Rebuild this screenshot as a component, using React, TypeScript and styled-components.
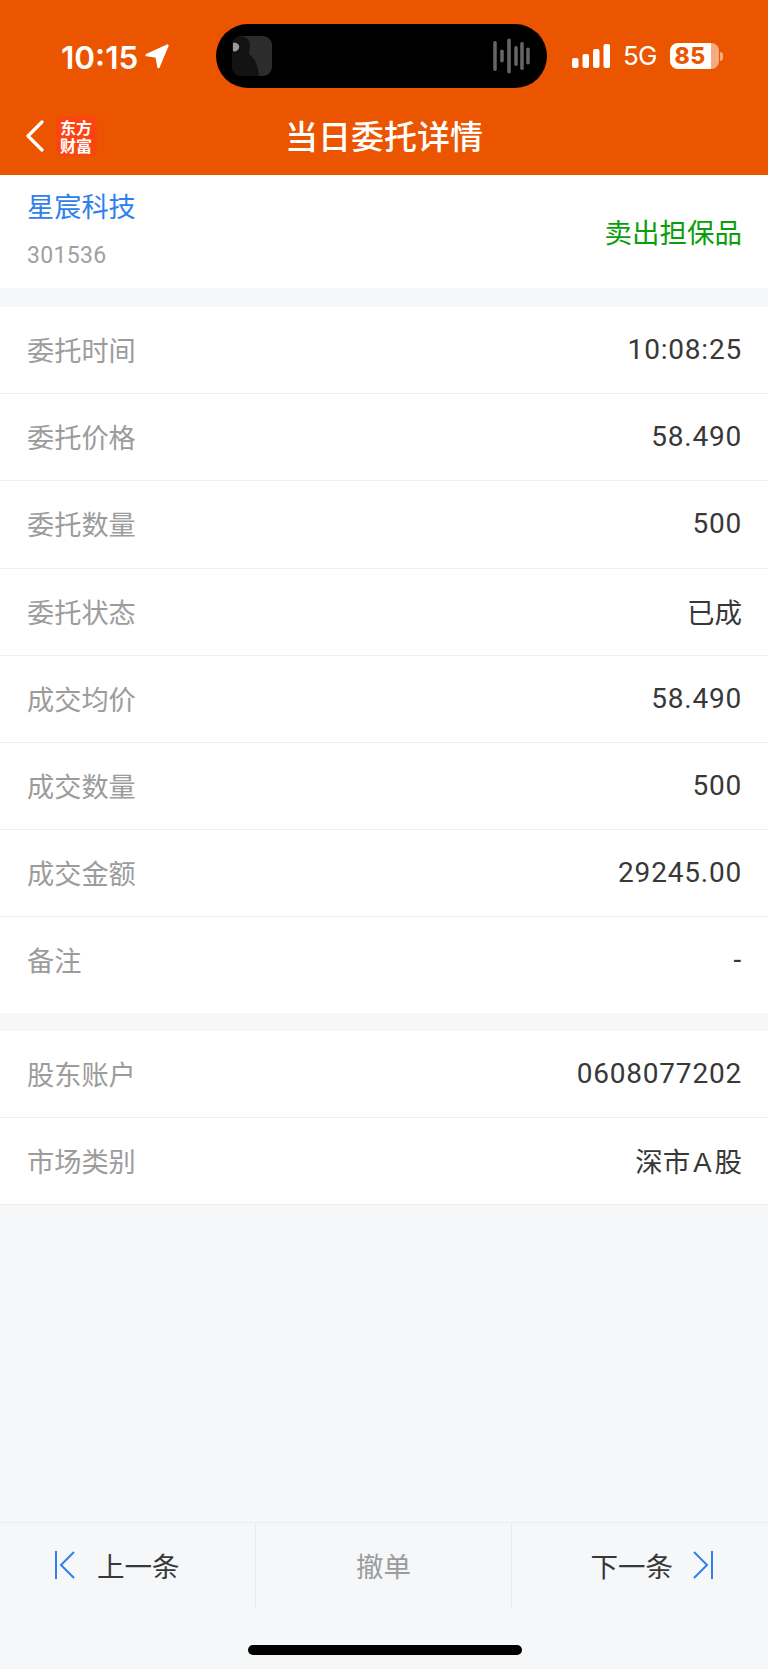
import React from 'react'
import styled, { createGlobalStyle } from 'styled-components'

const GlobalStyle = createGlobalStyle`
  html, body {
    margin: 0;
    padding: 0;
    background: #f6f7f9;
  }
  * {
    box-sizing: border-box;
  }
  body {
    font-family: "Liberation Sans", "Noto Sans CJK SC", sans-serif;
  }
`

const Page = styled.div`
  display: flex;
  flex-direction: column;
  width: 768px;
  height: 1669px;
  overflow: hidden;
  background: #f6f7f9;
`

const Header = styled.header`
  background: #ec5500;
  color: #fff;
  height: 175px;
`

const StatusBar = styled.div`
  display: flex;
  align-items: center;
  height: 64px;
  margin: 24px 0 8px;
  padding-left: 61px;
`

const Clock = styled.span`
  width: 76px;
  padding-top: 3px;
  font: 600 31.5px/1 Inter, sans-serif;
  white-space: nowrap;
`

const ArrowIcon = styled.svg`
  width: 26px;
  height: 26px;
  margin-left: 7px;
`

const Island = styled.div`
  display: flex;
  align-items: center;
  justify-content: space-between;
  width: 331px;
  height: 64px;
  margin-left: 46px;
  padding: 0 17px 0 16px;
  border-radius: 32px;
  background: #000;
`

const Thumb = styled.svg`
  width: 40px;
  height: 40px;
  border-radius: 9px;
`

const Wave = styled.svg`
  width: 37px;
  height: 36px;
`

const SignalIcon = styled.svg`
  width: 38px;
  height: 24px;
  margin-left: 25px;
`

const Network = styled.span`
  margin-left: 13px;
  font: 400 26px/1 Inter, sans-serif;
  letter-spacing: -0.8px;
`

const Battery = styled.div`
  display: flex;
  align-items: center;
  margin-left: 13px;
`

const BatteryBody = styled.div`
  width: 49px;
  height: 26px;
  padding-right: 8px;
  border-radius: 8px;
  background: linear-gradient(90deg, #fff 0 84%, rgba(255, 255, 255, 0.5) 84% 100%);
  color: #ec5500;
  font: 800 23px/26px Inter, sans-serif;
  text-align: center;
  letter-spacing: 0.4px;
`

const BatteryTip = styled.div`
  width: 3px;
  height: 9px;
  margin-left: 1px;
  border-radius: 0 3px 3px 0;
  background: rgba(255, 255, 255, 0.5);
`

const NavBar = styled.div`
  display: grid;
  grid-template-columns: 1fr auto 1fr;
  align-items: center;
  height: 79px;
  padding: 0 0 0 25px;
`

const NavLeft = styled.div`
  display: flex;
  align-items: center;
  gap: 12px;
`

const BackIcon = styled.svg`
  width: 19px;
  height: 32px;
`

const Logo = styled.div`
  width: 41px;
  height: 40px;
  padding: 2px 4px;
  border-radius: 7px;
  background: #fb4410;
  color: #fff;
  font: 700 16px/18px "Noto Sans CJK SC", sans-serif;
  word-break: break-all;
`

const Title = styled.h1`
  margin: 0;
  padding-right: 25px;
  font: 500 33px/1 "Noto Sans CJK SC", sans-serif;
`

const Stock = styled.section`
  display: flex;
  justify-content: space-between;
  height: 113px;
  padding: 19px 26px 0 27px;
  background: #fff;
`

const StockName = styled.div`
  color: #2f80ed;
  font-size: 27.2px;
  line-height: 28px;
`

const StockCode = styled.div`
  margin-top: 23px;
  color: #a0a0a0;
  font: 400 23px/22px Roboto, sans-serif;
  letter-spacing: 0.3px;
`

const Direction = styled.div`
  margin-top: 22px;
  color: #0a9e0a;
  font-size: 27.5px;
  line-height: 36px;
`

const Section = styled.section<{ $gap: number }>`
  margin-top: ${props => props.$gap}px;
  background: #fff;
`

const Row = styled.div<{ $tall?: boolean }>`
  display: flex;
  align-items: center;
  justify-content: space-between;
  height: ${props => (props.$tall ? 96 : 87.2)}px;
  padding: ${props => (props.$tall ? '0 26px 12px 27px' : '0 26px 2px 27px')};
  font-size: 27.2px;
  border-bottom: ${props => (props.$tall ? '0' : '1px solid #efefef')};
`

const Label = styled.span`
  color: #9c9c9c;
`

const Value = styled.span<{ $numeric?: boolean }>`
  padding-top: ${props => (props.$numeric ? 1 : 0)}px;
  color: #383838;
  font-family: ${props => (props.$numeric ? 'Roboto, sans-serif' : 'inherit')};
  font-size: ${props => (props.$numeric ? 28 : 27.5)}px;
  letter-spacing: ${props => (props.$numeric ? 0.8 : 0)}px;
`

const LatinGap = styled.span`
  margin: 0 3px;
`

const Toolbar = styled.nav`
  display: grid;
  grid-template-columns: repeat(3, 256px);
  height: 86px;
  margin-top: auto;
  border-top: 1px solid #ececee;
`

const ToolCell = styled.div<{ $align: 'start' | 'center' | 'end'; $muted?: boolean }>`
  display: flex;
  align-items: center;
  justify-content: ${props => props.$align};
  gap: ${props => (props.$align === 'end' ? 20 : 22)}px;
  padding: 0 55px 2px;
  border-right: ${props => (props.$align === 'end' ? '0' : '1px solid #ececee')};
  color: ${props => (props.$muted ? '#9c9c9c' : '#383838')};
  font-size: 27.5px;
`

const EndIcon = styled.svg`
  width: 20px;
  height: 28px;
  flex: none;
`

const HomeArea = styled.div`
  display: flex;
  justify-content: center;
  padding: 37px 0 14px 1px;
`

const HomeBar = styled.div`
  width: 274px;
  height: 10px;
  border-radius: 5px;
  background: #000;
`

const orderRows = [
  ['委托时间', '10:08:25'],
  ['委托价格', '58.490'],
  ['委托数量', '500'],
  ['委托状态', '已成'],
  ['成交均价', '58.490'],
  ['成交数量', '500'],
  ['成交金额', '29245.00'],
]

// x, height of each bar; they are centred on the island's middle line
const waveBars = [
  [2, 30],
  [9, 13],
  [16, 35],
  [23, 20],
  [29, 28],
  [35, 17],
]

export default function App() {
  return (
    <Page>
      <GlobalStyle />
      <Header>
        <StatusBar>
          <Clock>10:15</Clock>
          <ArrowIcon viewBox="0 0 26 26">
            <path d="M23.5 2.5 L2.5 12 L12.5 13.5 L14.5 24 Z" fill="#fff" stroke="#fff" strokeWidth="2.4" strokeLinejoin="round" />
          </ArrowIcon>
          <Island>
            <Thumb viewBox="0 0 40 40">
              <rect width="40" height="40" fill="#2c2c2c" />
              <path d="M0 40 V4 C4 -1 14 -1 17 5 C19 10 17 15 17 18 C22 21 26 28 27 40 Z" fill="#131313" />
              <path d="M1 7 C5 6 8 9 7 12 C6 15 3 16 1 15 Z" fill="#9a9a9a" />
            </Thumb>
            <Wave viewBox="0 0 37 36">
              {waveBars.map(([x, h]) => (
                <rect key={x} x={x - 1.75} y={18 - h / 2} width="3.5" height={h} rx="1.75" fill="#666" />
              ))}
            </Wave>
          </Island>
          <SignalIcon viewBox="0 0 38 24">
            <rect x="0" y="14" width="6.5" height="10" rx="2" fill="#fff" />
            <rect x="10.5" y="10" width="6.5" height="14" rx="2" fill="#fff" />
            <rect x="21" y="5" width="6.5" height="19" rx="2" fill="#fff" />
            <rect x="31.5" y="0" width="6.5" height="24" rx="2" fill="#fff" />
          </SignalIcon>
          <Network>5G</Network>
          <Battery>
            <BatteryBody>85</BatteryBody>
            <BatteryTip />
          </Battery>
        </StatusBar>
        <NavBar>
          <NavLeft>
            <BackIcon viewBox="0 0 19 32">
              <path d="M17 2 L3 16 L17 30" fill="none" stroke="#fff" strokeWidth="3.2" strokeLinecap="round" strokeLinejoin="round" />
            </BackIcon>
            <Logo>东方财富</Logo>
          </NavLeft>
          <Title>当日委托详情</Title>
        </NavBar>
      </Header>

      <Stock>
        <div>
          <StockName>星宸科技</StockName>
          <StockCode>301536</StockCode>
        </div>
        <Direction>卖出担保品</Direction>
      </Stock>

      <Section $gap={19}>
        {orderRows.map(([label, value]) => (
          <Row key={label}>
            <Label>{label}</Label>
            <Value $numeric={/\d/.test(value)}>{value}</Value>
          </Row>
        ))}
        <Row $tall>
          <Label>备注</Label>
          <Value>-</Value>
        </Row>
      </Section>

      <Section $gap={17.5}>
        <Row>
          <Label>股东账户</Label>
          <Value $numeric>0608077202</Value>
        </Row>
        <Row>
          <Label>市场类别</Label>
          <Value>
            深市<LatinGap>A</LatinGap>股
          </Value>
        </Row>
      </Section>

      <Toolbar>
        <ToolCell $align="start">
          <EndIcon viewBox="0 0 20 28">
            <path d="M1 0 V28 M19 1 L6 14 L19 27" fill="none" stroke="#2f80ed" strokeWidth="2" />
          </EndIcon>
          上一条
        </ToolCell>
        <ToolCell $align="center" $muted>
          撤单
        </ToolCell>
        <ToolCell $align="end">
          下一条
          <EndIcon viewBox="0 0 20 28">
            <path d="M19 0 V28 M1 1 L14 14 L1 27" fill="none" stroke="#2f80ed" strokeWidth="2" />
          </EndIcon>
        </ToolCell>
      </Toolbar>
      <HomeArea>
        <HomeBar />
      </HomeArea>
    </Page>
  )
}
